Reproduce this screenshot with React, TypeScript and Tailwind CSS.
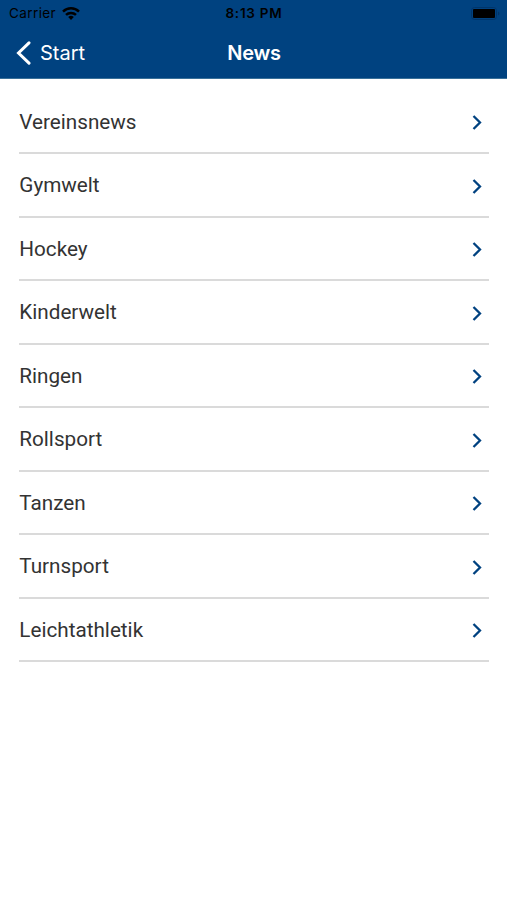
const sections = [
  'Vereinsnews',
  'Gymwelt',
  'Hockey',
  'Kinderwelt',
  'Ringen',
  'Rollsport',
  'Tanzen',
  'Turnsport',
  'Leichtathletik',
]

function StatusBar() {
  return (
    <div className="grid h-[27px] grid-cols-3 items-center text-black">
      <div className="flex items-center gap-1.5 pl-[9px]">
        <span className="pt-px text-[13.5px] leading-none tracking-[0.4px]">Carrier</span>
        <svg width="18" height="13" viewBox="0 0 18 13" fill="none" stroke="currentColor" strokeWidth="2.5">
          <path d="M1 4.6a11.5 11.5 0 0 1 16 0" />
          <path d="M4 7.9a7.2 7.2 0 0 1 10 0" />
          <path d="M9 13 6.2 10a4.2 4.2 0 0 1 5.6 0Z" fill="currentColor" stroke="none" />
        </svg>
      </div>
      <div className="pt-px pl-px text-center text-[13.5px] leading-none font-semibold tracking-[0.75px]">8:13 PM</div>
      <div className="flex justify-end pr-[7px]">
        <svg width="29" height="13" viewBox="0 0 29 13">
          <rect x="0.5" y="0.5" width="25" height="12" rx="3" fill="none" stroke="#00356a" />
          <rect x="2" y="2" width="22" height="9" rx="1" />
          <path d="M27 4.5c2 .7 2 3.3 0 4z" fill="#00356a" />
        </svg>
      </div>
    </div>
  )
}

function NavBar() {
  return (
    <div className="grid h-[51px] grid-cols-3 items-center text-white">
      <div className="flex items-center gap-[9px] pl-4">
        <svg
          width="15"
          height="24"
          viewBox="0 0 15 24"
          fill="none"
          stroke="currentColor"
          strokeWidth="3"
          strokeLinecap="round"
        >
          <path d="M13 1.8 2.500 12 13 22.2" />
        </svg>
        <span className="text-[20px] leading-none">Start</span>
      </div>
      <h1 className="pl-px text-center text-[20px] leading-none font-semibold tracking-[-0.2px]">News</h1>
    </div>
  )
}

function SectionRow({ title }: { title: string }) {
  return (
    <li className="flex h-[63.5px] items-center justify-between border-b-2 border-[#dadada] pr-[7px]">
      <span className="pt-[1.500px] text-[20.7px] leading-none">{title}</span>
      <svg className="mt-[3px]" width="10" height="15" viewBox="0 0 10 15" fill="none" stroke="#004280" strokeWidth="2.3">
        <path d="m1.500 1 6.500 6.500L1.500 14" />
      </svg>
    </li>
  )
}

export default function App() {
  return (
    <div className="min-h-screen bg-white font-['Roboto',sans-serif] text-[#333]">
      <header className="border-b border-[#397099] bg-[#004280] font-['Inter',sans-serif]">
        <StatusBar />
        <NavBar />
      </header>
      <ul className="pt-[11.500px] pr-[18px] pl-[19.300px]">
        {sections.map((title) => (
          <SectionRow key={title} title={title} />
        ))}
      </ul>
    </div>
  )
}
